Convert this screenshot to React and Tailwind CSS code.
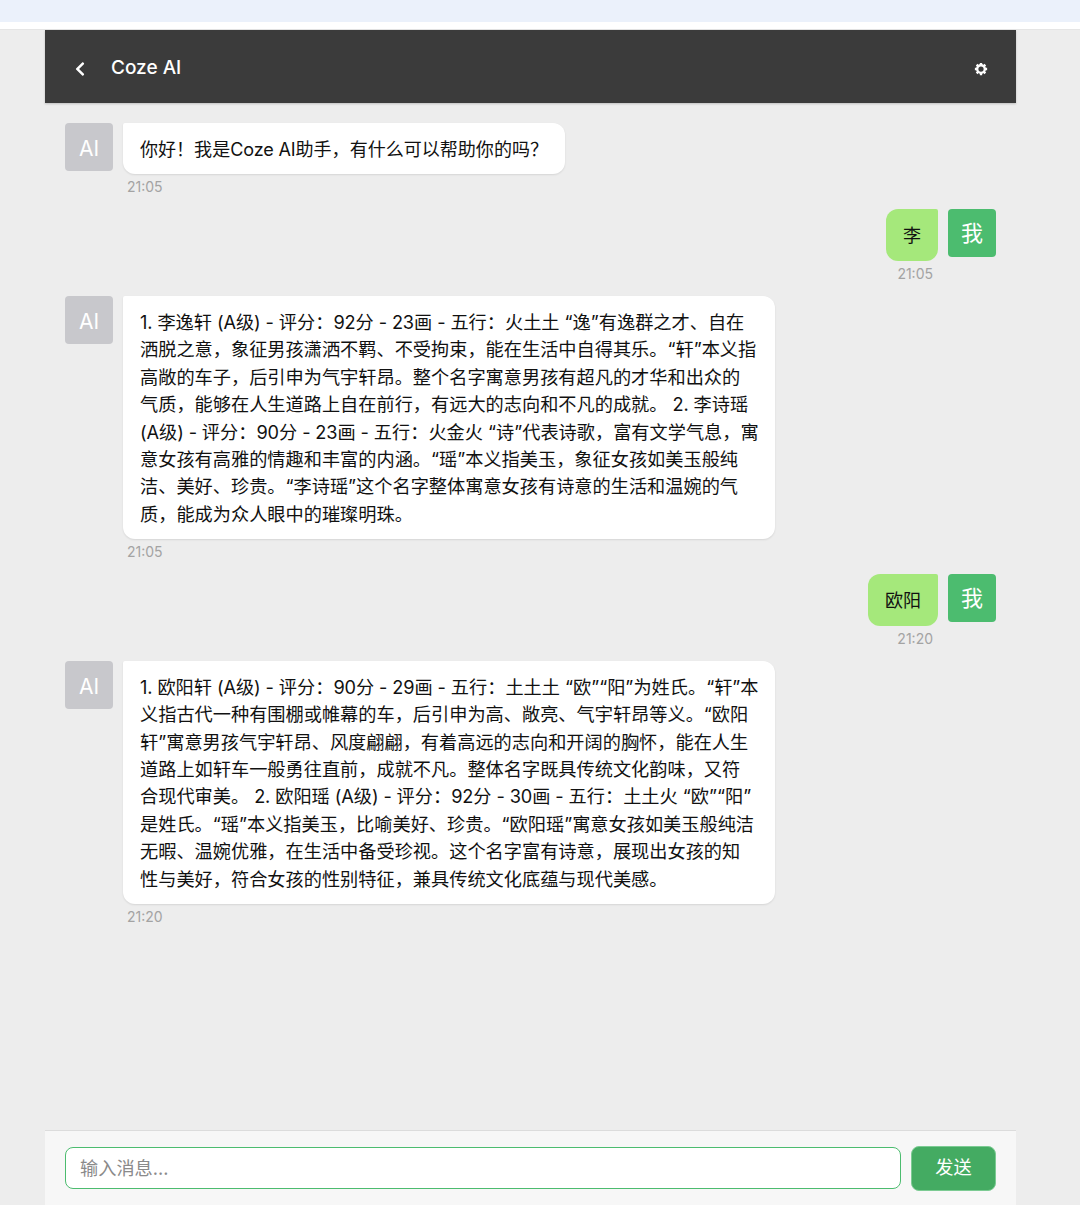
import { FaChevronLeft } from "react-icons/fa";

const FONT = "font-['Inter','Noto_Sans_CJK_SC',sans-serif]";

const MESSAGES = [
  { side: "ai", time: "21:05", lines: ["你好！我是Coze AI助手，有什么可以帮助你的吗？"] },
  { side: "me", time: "21:05", lines: ["李"] },
  {
    side: "ai",
    time: "21:05",
    wide: true,
    lines: [
      "1. 李逸轩 (A级) - 评分：92分 - 23画 - 五行：火土土 “逸”有逸群之才、自在",
      "洒脱之意，象征男孩潇洒不羁、不受拘束，能在生活中自得其乐。“轩”本义指",
      "高敞的车子，后引申为气宇轩昂。整个名字寓意男孩有超凡的才华和出众的",
      "气质，能够在人生道路上自在前行，有远大的志向和不凡的成就。 2. 李诗瑶",
      "(A级) - 评分：90分 - 23画 - 五行：火金火 “诗”代表诗歌，富有文学气息，寓",
      "意女孩有高雅的情趣和丰富的内涵。“瑶”本义指美玉，象征女孩如美玉般纯",
      "洁、美好、珍贵。“李诗瑶”这个名字整体寓意女孩有诗意的生活和温婉的气",
      "质，能成为众人眼中的璀璨明珠。",
    ],
  },
  { side: "me", time: "21:20", lines: ["欧阳"] },
  {
    side: "ai",
    time: "21:20",
    wide: true,
    lines: [
      "1. 欧阳轩 (A级) - 评分：90分 - 29画 - 五行：土土土 “欧”“阳”为姓氏。“轩”本",
      "义指古代一种有围棚或帷幕的车，后引申为高、敞亮、气宇轩昂等义。“欧阳",
      "轩”寓意男孩气宇轩昂、风度翩翩，有着高远的志向和开阔的胸怀，能在人生",
      "道路上如轩车一般勇往直前，成就不凡。整体名字既具传统文化韵味，又符",
      "合现代审美。 2. 欧阳瑶 (A级) - 评分：92分 - 30画 - 五行：土土火 “欧”“阳”",
      "是姓氏。“瑶”本义指美玉，比喻美好、珍贵。“欧阳瑶”寓意女孩如美玉般纯洁",
      "无暇、温婉优雅，在生活中备受珍视。这个名字富有诗意，展现出女孩的知",
      "性与美好，符合女孩的性别特征，兼具传统文化底蕴与现代美感。",
    ],
  },
];

function GearIcon() {
  // ring with eight short teeth
  return (
    <svg viewBox="0 0 24 24" className="size-[14px] mt-1" fill="none" stroke="white">
      <circle cx="12" cy="12" r="6.5" strokeWidth="4" />
      {[0, 45, 90, 135].map((deg) => (
        <path key={deg} d="M12 1.5V22.5" strokeWidth="4" strokeDasharray="4 13" transform={`rotate(${deg} 12 12)`} />
      ))}
    </svg>
  );
}

// latin runs sit a touch tighter than Inter's default next to the CJK text
function Line({ text }) {
  return (
    <div className="whitespace-nowrap">
      {text.split(/([\x20-\x7e]+)/).map((part, i) =>
        i % 2 ? (
          <span key={i} className="tracking-[-0.13px]">
            {part}
          </span>
        ) : (
          part
        ),
      )}
    </div>
  );
}

function Message({ side, time, lines, wide }) {
  const me = side === "me";
  return (
    <div className={`flex gap-2.5 mb-[14.8px] ${me ? "flex-row-reverse" : ""}`}>
      <div
        className={`w-12 h-12 shrink-0 rounded flex items-center justify-center text-white ${
          me ? "bg-[#4cbc6f] text-[22px]" : "bg-[#c8c8cc] text-[21px] pt-1"
        }`}
      >
        {me ? "我" : "AI"}
      </div>
      <div className={`flex flex-col ${me ? "items-end" : "items-start"}`}>
        <div
          className={`px-[17px] leading-[27.4px] text-[#111] ${wide ? "w-[652px] text-[18.2px]" : "text-[18.05px]"} ${
            me
              ? "bg-[#a5e87b] rounded-xl rounded-tr-[2px] pt-[13px] pb-[11.6px]"
              : "bg-white rounded-xl rounded-tl-[2px] shadow-[0_1px_2px_rgba(0,0,0,0.1)] pt-[13px] pb-[11px]"
          }`}
        >
          {lines.map((line) => (
            <Line key={line} text={line} />
          ))}
        </div>
        <div className={`mt-[5px] text-[14px] leading-[15px] text-[#a3a3a3] ${me ? "mr-[5px]" : "ml-1"}`}>{time}</div>
      </div>
    </div>
  );
}

export default function App() {
  return (
    <div className={`${FONT} h-[1205px] flex flex-col bg-[#ededed] overflow-hidden`}>
      <div className="h-[22px] shrink-0 bg-[#ebf1fb]" />
      <div className="h-2 shrink-0 bg-white border-b border-[#e5e5e5]" />

      <div className="ml-[45px] w-[971px] flex-1 flex flex-col min-h-0">
        {/* Header */}
        <header className="h-[73px] shrink-0 flex items-center justify-between bg-[#3b3b3b] text-white pl-[27px] pr-[28px] shadow-[0_1px_2px_rgba(0,0,0,0.2)]">
          <div className="flex items-center gap-[23px]">
            <FaChevronLeft className="size-4 mt-[5px]" />
            <span className="text-[19px] font-medium translate-y-0.5">Coze AI</span>
          </div>
          <GearIcon />
        </header>

        {/* Messages */}
        <main className="flex-1 min-h-0 px-5 pt-5">
          {MESSAGES.map((m, i) => (
            <Message key={i} {...m} />
          ))}
        </main>

        {/* Input bar */}
        <footer className="h-[75px] shrink-0 flex items-center gap-2.5 px-5 bg-[#f7f7f7] border-t border-[#dcdcdc]">
          <input
            placeholder="输入消息..."
            className="flex-1 h-[42px] px-[14px] bg-white rounded-lg border border-[#4cbc6f] text-[18.2px] outline-none placeholder:text-[#8a8a8a]"
          />
          <button className="w-[85px] h-[45px] rounded-lg bg-[#44ab62] border border-[#7ccb93] text-white text-[18.2px]">
            发送
          </button>
        </footer>
      </div>
    </div>
  );
}
